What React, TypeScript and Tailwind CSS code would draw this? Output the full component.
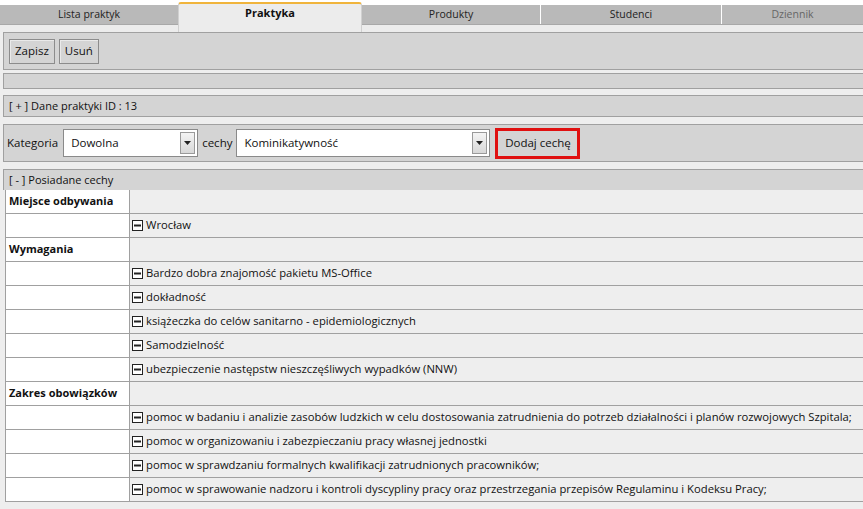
import React from "react";

const font = { fontFamily: '"Open Sans", "Noto Sans", sans-serif' };

function MinusBox() {
  return (
    <svg width="11" height="11" viewBox="0 0 11 11" className="mr-[3px] shrink-0">
      <rect x="0.5" y="0.5" width="10" height="10" fill="#fff" stroke="#222" />
      <rect x="2" y="4.5" width="7" height="2" fill="#222" />
    </svg>
  );
}

function Select({ value, w }: { value: string; w: string }) {
  return (
    <div className={`${w} h-[28px] bg-white border border-[#8a8a8a] flex items-center`}>
      <span className="flex-1 pl-[7px] text-[11.5px] text-[#111]">{value}</span>
      <div className="w-[15px] h-[22px] mr-[2px] border border-[#9a9a9a] bg-gradient-to-b from-[#f4f4f4] to-[#d8d8d8] flex items-center justify-center">
        <svg width="7" height="4" viewBox="0 0 7 4">
          <path d="M0 0 L7 0 L3.5 4 Z" fill="#222" />
        </svg>
      </div>
    </div>
  );
}

type Row = { kind: "head" | "item"; text: string };
const rows: Row[] = [
  { kind: "head", text: "Miejsce odbywania" },
  { kind: "item", text: "Wrocław" },
  { kind: "head", text: "Wymagania" },
  { kind: "item", text: "Bardzo dobra znajomość pakietu MS-Office" },
  { kind: "item", text: "dokładność" },
  { kind: "item", text: "książeczka do celów sanitarno - epidemiologicznych" },
  { kind: "item", text: "Samodzielność" },
  { kind: "item", text: "ubezpieczenie następstw nieszczęśliwych wypadków (NNW)" },
  { kind: "head", text: "Zakres obowiązków" },
  { kind: "item", text: "pomoc w badaniu i analizie zasobów ludzkich w celu dostosowania zatrudnienia do potrzeb działalności i planów rozwojowych Szpitala;" },
  { kind: "item", text: "pomoc w organizowaniu i zabezpieczaniu pracy własnej jednostki" },
  { kind: "item", text: "pomoc w sprawdzaniu formalnych kwalifikacji zatrudnionych pracowników;" },
  { kind: "item", text: "pomoc w sprawowanie nadzoru i kontroli dyscypliny pracy oraz przestrzegania przepisów Regulaminu i Kodeksu Pracy;" },
];

export default function App() {
  return (
    <div className="w-[863px] h-[509px] bg-[#eeeeee] overflow-hidden text-[11.5px] text-[#111]" style={font}>
      {/* Tabs */}
      <div className="h-[25px] bg-white flex items-end relative z-10">
        <div className="flex w-full h-[20px] items-stretch border-b border-[#a8a8a8] text-[10.5px]">
          <div className="w-[178px] bg-[#b9b9b9] flex items-center justify-center text-[#222]">Lista praktyk</div>
          <div className="w-[184px] relative">
            <div className="absolute left-0 right-0 top-[-3px] h-[30px] bg-[#ececec] border-t-2 border-[#f0b43c] rounded-t-[3px] border-x border-x-[#d0d0d0] flex justify-center pt-[1px] font-bold text-[11px] text-[#111]">
              Praktyka
            </div>
          </div>
          <div className="w-[179px] bg-[#b9b9b9] flex items-center justify-center text-[#222] border-r border-white">Produkty</div>
          <div className="w-[181px] bg-[#b9b9b9] flex items-center justify-center text-[#222] border-r border-white">Studenci</div>
          <div className="flex-1 bg-[#b9b9b9] flex items-center justify-center text-[#666]">Dziennik</div>
        </div>
      </div>
      <div className="h-[7px] bg-[#ececec]" />

      {/* Toolbar */}
      <div className="ml-[3px] h-[38px] bg-[#d4d4d4] border-y border-[#a0a0a0] border-l flex items-center gap-[4px] pl-[5px]">
        <button className="h-[25px] px-[5px] bg-[#d4d4d4] border border-[#8c8c8c] shadow-[inset_1px_1px_0_#eaeaea] text-[11.5px]" style={font}>Zapisz</button>
        <button className="h-[25px] px-[5px] bg-[#d4d4d4] border border-[#8c8c8c] shadow-[inset_1px_1px_0_#eaeaea] text-[11.5px]" style={font}>Usuń</button>
      </div>
      <div className="h-[3px]" />
      <div className="ml-[3px] h-[16px] bg-[#d4d4d4] border-y border-l border-[#a0a0a0]" />
      <div className="h-[6px]" />

      {/* Dane praktyki */}
      <div className="ml-[3px] h-[22px] bg-[#d4d4d4] border-y border-l border-[#a0a0a0] flex items-center pl-[5px] text-[11px]">
        [ + ] Dane praktyki ID : 13
      </div>
      <div className="h-[7px]" />

      {/* Filter */}
      <div className="ml-[3px] h-[38px] bg-[#d4d4d4] border-y border-l border-[#a0a0a0] flex items-center pl-[3px]">
        <span className="mr-[5px]">Kategoria</span>
        <Select value="Dowolna" w="w-[135px]" />
        <span className="mx-[4px]">cechy</span>
        <Select value="Kominikatywność" w="w-[254px]" />
        <div className="ml-[5px] h-[31px] w-[85px] border-[3px] border-[#e01010] flex items-center">
          <button className="h-full w-full bg-[#d4d4d4] text-[11.5px]" style={font}>Dodaj cechę</button>
        </div>
      </div>
      <div className="h-[7px]" />

      {/* Posiadane cechy */}
      <div className="ml-[3px] h-[21px] bg-[#d4d4d4] border-t border-l border-[#a0a0a0] flex items-center pl-[5px] text-[11px]">
        [ - ] Posiadane cechy
      </div>
      <div className="ml-[5px] border-l border-[#a0a0a0]">
        {rows.map((r, i) => (
          <div key={i} className="flex h-[24px] border-b border-[#a0a0a0]">
            <div className="w-[124px] bg-white border-r border-[#a0a0a0] flex items-center pl-[3px] font-bold text-[11px]">
              {r.kind === "head" ? r.text : ""}
            </div>
            <div className="flex-1 bg-[#eeeeee] flex items-center pl-[2px] whitespace-nowrap overflow-hidden text-[11.25px]">
              {r.kind === "item" && (
                <>
                  <MinusBox />
                  <span>{r.text}</span>
                </>
              )}
            </div>
          </div>
        ))}
      </div>
    </div>
  );
}
